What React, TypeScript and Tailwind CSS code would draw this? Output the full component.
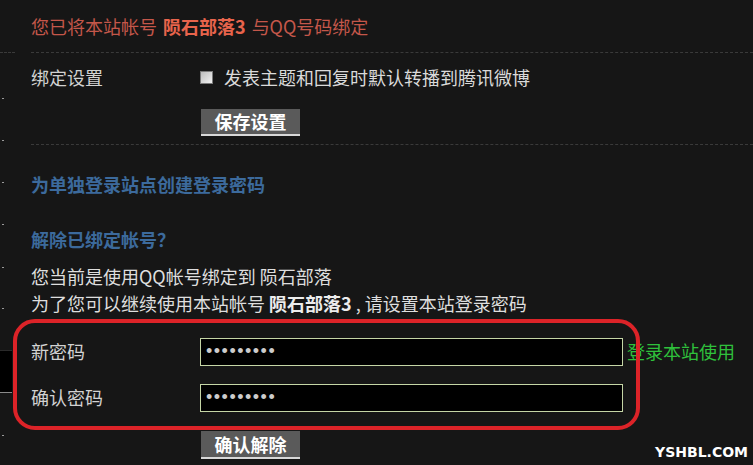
export default function App() {
  const font = { fontFamily: '"Microsoft YaHei", "Noto Sans CJK SC", "Noto Sans", sans-serif' };

  return (
    <div className="relative w-[753px] h-[465px] overflow-hidden bg-[#161616] text-[18px]" style={font}>
      {/* cut-off sidebar remnants on the left edge */}
      <div className="absolute left-0 top-[52px] w-[15px] border-t border-dashed border-[#3a3a3a]" />
      {[98, 140, 182, 224, 267, 308, 435].map((y) => (
        <div key={y} className="absolute left-[2px] w-[2px] h-[1px] bg-[#9a9a9a]" style={{ top: y }} />
      ))}
      <div className="absolute left-0 top-[350px] w-[12px] h-[43px] bg-black border-t border-[#2a2a2a] border-b border-b-[#8a8a8a]" />

      <div className="pl-[31px]">
        {/* bound notice */}
        <div className="h-[53px] flex items-center border-b border-dashed border-[#3a3a3a] text-[#c4574a]">
          <span>您已将本站帐号</span>
          <b className="ml-[6px] mr-[6px] text-[#e8644c]">陨石部落3</b>
          <span>与QQ号码绑定</span>
        </div>

        {/* bind settings */}
        <div className="pb-[8px] border-b border-dashed border-[#3a3a3a]">
          <div className="flex h-[48px] items-center">
            <div className="w-[169px] text-[#d2d2d2]">绑定设置</div>
            <label className="flex items-center text-[#dadada]">
              <span className="w-[13px] h-[13px] border border-[#7a7a7a] bg-gradient-to-br from-[#bdbdbd] to-[#f2f2f2]" />
              <span className="ml-[11px]">发表主题和回复时默认转播到腾讯微博</span>
            </label>
          </div>
          <div className="pl-[170px] pt-[7px]">
            <button className="w-[99px] h-[27px] bg-[#5a5a5a] border-b-2 border-[#d8d8d8] text-white font-bold leading-none">
              保存设置
            </button>
          </div>
        </div>

        <div className="mt-[27px] leading-[24px] font-bold text-[#3c6a9c]">为单独登录站点创建登录密码</div>
        <div className="mt-[31px] leading-[24px] font-bold text-[#3c6a9c]">解除已绑定帐号？</div>

        <div className="mt-[12px] leading-[27px] text-[#dedede]">
          <div>您当前是使用QQ帐号绑定到 陨石部落</div>
          <div>
            为了您可以继续使用本站帐号 <b className="text-[#ececec]">陨石部落3</b> , 请设置本站登录密码
          </div>
        </div>

        {/* password form */}
        <div className="relative mt-[2px] pt-[19px] pb-[18px] flex flex-col gap-[18px]">
          <div className="flex h-[28px] items-center whitespace-nowrap">
            <div className="w-[169px] text-[#d2d2d2]">新密码</div>
            <input
              type="password"
              readOnly
              value="123456789"
              className="w-[423px] h-[28px] bg-black border border-[#c5d6a6] px-[5px] text-[18px] tracking-[1.5px] text-[#cccccc] outline-none"
              style={{ fontFamily: '"Liberation Sans", sans-serif' }}
            />
            <span className="ml-[4px] text-[#2fc13c]">登录本站使用</span>
          </div>
          <div className="flex h-[28px] items-center">
            <div className="w-[169px] text-[#d2d2d2]">确认密码</div>
            <input
              type="password"
              readOnly
              value="123456789"
              className="w-[423px] h-[28px] bg-black border border-[#c5d6a6] px-[5px] text-[18px] tracking-[1.5px] text-[#cccccc] outline-none"
              style={{ fontFamily: '"Liberation Sans", sans-serif' }}
            />
          </div>
          {/* red annotation ring drawn over the form */}
          <div className="pointer-events-none absolute -left-[18px] top-0 bottom-0 w-[627px] border-4 border-[#dc2328] rounded-[22px]" />
        </div>

        <div className="pl-[170px] pt-[1px]">
          <button className="w-[99px] h-[28px] bg-[#5a5a5a] border-b-2 border-[#d8d8d8] text-white font-bold leading-none">
            确认解除
          </button>
        </div>
      </div>

      {/* watermark */}
      <div
        className="absolute right-[5px] bottom-[6px] text-[14px] font-black tracking-[0px] text-white leading-none"
        style={{ fontFamily: '"DejaVu Sans", sans-serif' }}
      >
        YSHBL.COM
      </div>
    </div>
  );
}
